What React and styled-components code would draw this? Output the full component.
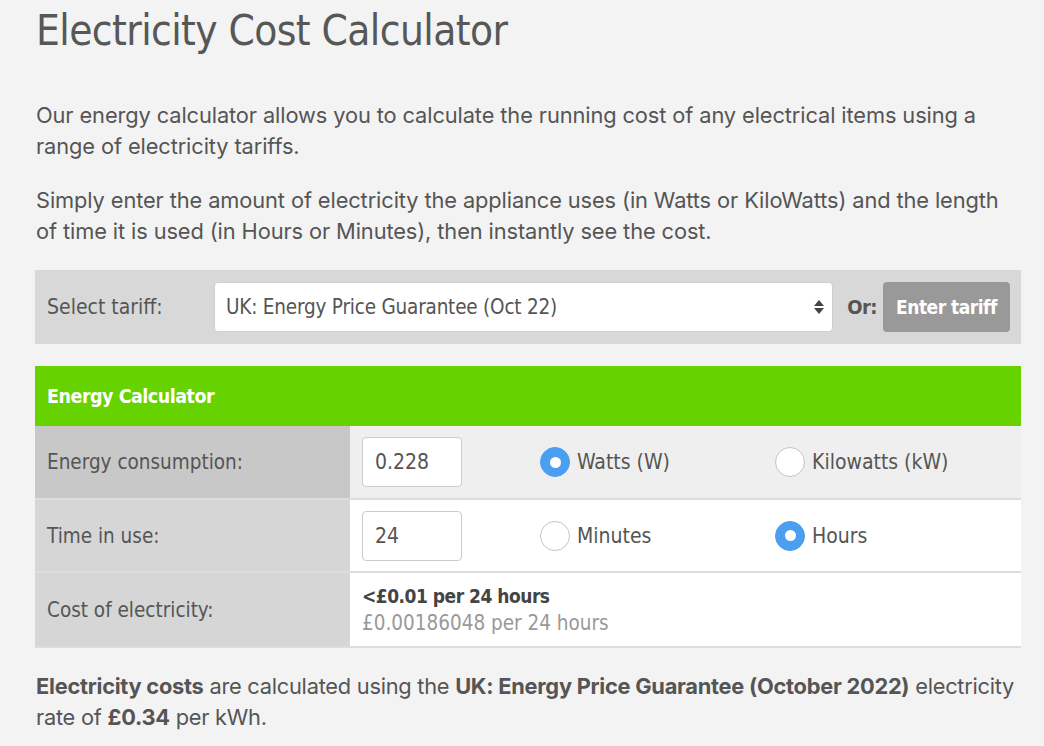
import React from "react";
import styled, { createGlobalStyle } from "styled-components";

const GlobalStyle = createGlobalStyle`
  html, body {
    margin: 0;
    padding: 0;
    background: #f3f3f3;
  }
  body {
    font-family: Inter, "Liberation Sans", sans-serif;
    color: #555555;
  }
`;

const condensed = `"DejaVu Sans Condensed", "DejaVu Sans", sans-serif`;

const Page = styled.div`
  width: 986px;
  padding: 0 0 0 35px;
`;

const Title = styled.h1`
  margin: 0 0 42px 1px;
  padding-top: 4px;
  font-family: ${condensed};
  font-weight: 400;
  font-size: 42px;
  letter-spacing: -0.6px;
  line-height: 54px;
  color: #575757;
`;

const Para = styled.p`
  margin: 0 0 23px 1px;
  font-size: 21.8px;
  line-height: 31px;
  letter-spacing: ${(p) => (p.$tight ? "-0.25px" : "-0.1px")};
  color: #555555;
  white-space: nowrap;

  b {
    font-weight: 700;
  }
`;

const TariffBar = styled.div`
  display: flex;
  align-items: center;
  height: 74px;
  padding: 0 11px 0 12px;
  background: #d8d8d8;
  font-family: ${condensed};
`;

const BarLabel = styled.span`
  width: 167px;
  font-size: 21px;
  color: #555555;
`;

const SelectWrap = styled.div`
  position: relative;
  flex: 1;
`;

const Select = styled.select`
  width: 100%;
  height: 50px;
  appearance: none;
  border: 1px solid #cfcfcf;
  border-radius: 4px;
  background: #ffffff;
  padding: 0 36px 0 11px;
  font-family: ${condensed};
  font-size: 20.5px;
  letter-spacing: -0.2px;
  color: #555555;
`;

const SelectArrows = styled.svg`
  position: absolute;
  right: 8px;
  top: 17px;
  pointer-events: none;
`;

const OrText = styled.span`
  margin: 0 6px 0 14px;
  font-size: 20px;
  font-weight: 700;
  letter-spacing: -0.5px;
  color: #555555;
`;

const TariffButton = styled.button`
  width: 127px;
  height: 50px;
  padding: 0;
  border: none;
  border-radius: 4px;
  background: #999999;
  color: #ffffff;
  white-space: nowrap;
  font-family: ${condensed};
  font-size: 19px;
  letter-spacing: -0.5px;
  font-weight: 700;
`;

const Calc = styled.div`
  margin: 22px 0 23px;
  font-family: ${condensed};
`;

const CalcHeader = styled.div`
  display: flex;
  align-items: center;
  height: 60px;
  padding-left: 12px;
  background: #66d300;
  color: #ffffff;
  font-size: 19.5px;
  letter-spacing: -0.5px;
  font-weight: 700;
`;

const Row = styled.div`
  display: grid;
  grid-template-columns: 315px 1fr;
  height: ${(p) => p.$height}px;
  border-bottom: 2px solid #dddddd;
`;

const LabelCell = styled.div`
  display: flex;
  align-items: center;
  padding-left: 12px;
  background: ${(p) => (p.$shade ? "#c8c8c8" : "#d6d6d6")};
  font-size: 20.5px;
  color: #555555;
`;

const ValueCell = styled.div`
  display: grid;
  grid-template-columns: 178px 235px 1fr;
  align-items: center;
  padding-left: 12px;
  background: ${(p) => (p.$shade ? "#efefef" : "#ffffff")};
`;

const NumberInput = styled.input`
  width: 100px;
  height: 50px;
  box-sizing: border-box;
  border: 1px solid #cccccc;
  border-radius: 4px;
  background: #ffffff;
  padding: 0 12px;
  font-family: ${condensed};
  font-size: 21px;
  color: #555555;
`;

const RadioLabel = styled.label`
  display: flex;
  align-items: center;
  gap: 7px;
  font-size: 21px;
  color: #555555;
`;

const RadioDot = styled.span`
  width: 30px;
  height: 30px;
  box-sizing: border-box;
  border-radius: 50%;
  display: flex;
  align-items: center;
  justify-content: center;
  background: ${(p) => (p.$checked ? "#4a9ff0" : "#ffffff")};
  border: 1px solid ${(p) => (p.$checked ? "#4a9ff0" : "#c4c4c4")};

  &::after {
    content: "";
    display: ${(p) => (p.$checked ? "block" : "none")};
    width: 11px;
    height: 11px;
    border-radius: 50%;
    background: #ffffff;
  }
`;

const Result = styled.div`
  display: flex;
  flex-direction: column;
  justify-content: center;
  padding-left: 12px;
  background: #ffffff;
  font-size: 20.5px;
  line-height: 27px;
`;

const ResultMain = styled.span`
  font-weight: 700;
  font-size: 19px;
  letter-spacing: -0.5px;
  color: #444444;
`;

const ResultSub = styled.span`
  color: #999999;
`;

function Radio({ checked, children }) {
  return (
    <RadioLabel>
      <RadioDot $checked={checked} />
      {children}
    </RadioLabel>
  );
}

export default function App() {
  return (
    <Page>
      <GlobalStyle />
      <Title>Electricity Cost Calculator</Title>
      <Para>
        Our energy calculator allows you to calculate the running cost of any electrical items using a
        <br />
        range of electricity tariffs.
      </Para>
      <Para>
        Simply enter the amount of electricity the appliance uses (in Watts or KiloWatts) and the length
        <br />
        of time it is used (in Hours or Minutes), then instantly see the cost.
      </Para>

      <TariffBar>
        <BarLabel>Select tariff:</BarLabel>
        <SelectWrap>
          <Select defaultValue="epg">
            <option value="epg">UK: Energy Price Guarantee (Oct 22)</option>
          </Select>
          <SelectArrows width="12" height="16" viewBox="0 0 12 16">
            <path d="M6 1 L11 7 H1 Z" fill="#444" />
            <path d="M6 15 L11 9 H1 Z" fill="#444" />
          </SelectArrows>
        </SelectWrap>
        <OrText>Or:</OrText>
        <TariffButton>Enter tariff</TariffButton>
      </TariffBar>

      <Calc>
        <CalcHeader>Energy Calculator</CalcHeader>
        <Row $height={72}>
          <LabelCell $shade>Energy consumption:</LabelCell>
          <ValueCell $shade>
            <NumberInput defaultValue="0.228" />
            <Radio checked>Watts (W)</Radio>
            <Radio>Kilowatts (kW)</Radio>
          </ValueCell>
        </Row>
        <Row $height={71}>
          <LabelCell>Time in use:</LabelCell>
          <ValueCell>
            <NumberInput defaultValue="24" />
            <Radio>Minutes</Radio>
            <Radio checked>Hours</Radio>
          </ValueCell>
        </Row>
        <Row $height={73}>
          <LabelCell>Cost of electricity:</LabelCell>
          <Result>
            <ResultMain>&lt;£0.01 per 24 hours</ResultMain>
            <ResultSub>£0.00186048 per 24 hours</ResultSub>
          </Result>
        </Row>
      </Calc>

      <Para $tight>
        <b>Electricity costs</b> are calculated using the <b>UK: Energy Price Guarantee (October 2022)</b> electricity
        <br />
        rate of <b>£0.34</b> per kWh.
      </Para>
    </Page>
  );
}
